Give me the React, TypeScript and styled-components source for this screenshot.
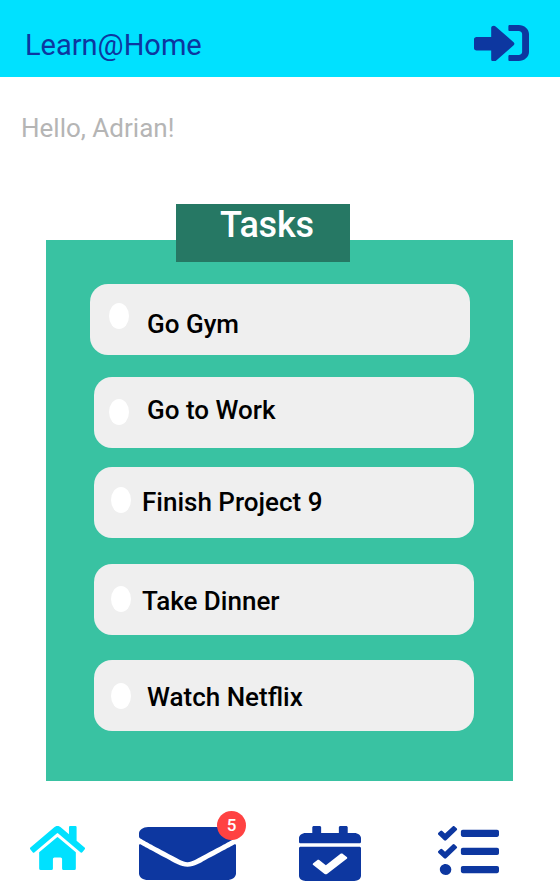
import React from "react";
import styled, { createGlobalStyle } from "styled-components";
import { FaCalendarCheck, FaEnvelope, FaHome, FaSignInAlt, FaTasks } from "react-icons/fa";

const GlobalStyle = createGlobalStyle`
  * { box-sizing: border-box; }
  body { margin: 0; background: #fff; font-family: Roboto, sans-serif; }
`;

const Page = styled.div`
  width: 560px;
  height: 896px;
  display: flex;
  flex-direction: column;
  overflow: hidden;
`;

const Header = styled.header`
  height: 77px;
  background: #00e1ff;
  color: #0d37a0;
  display: flex;
  justify-content: space-between;
  padding: 25px 31px 0 25px;
`;

const Brand = styled.div`
  font-size: 29px;
  line-height: 40px;
`;

const SignInIcon = styled(FaSignInAlt)`
  width: 55px;
  height: 36px;
`;

const Greeting = styled.p`
  margin: 33px 0 0 21px;
  height: 94px;
  font-size: 26px;
  line-height: 36px;
  color: #b5b5b5;
`;

const Board = styled.section`
  width: 467px;
  height: 577px;
  margin-left: 46px;
  display: flex;
  flex-direction: column;
  background: linear-gradient(#fff 36px, #39c2a2 36px);
`;

const BoardTitle = styled.h1`
  margin: 0 0 22px 130px;
  width: 174px;
  height: 58px;
  padding-left: 44px;
  background: #267864;
  color: #fff;
  font-size: 36px;
  font-weight: 500;
  line-height: 42px;
  letter-spacing: -0.2px;
`;

const Task = styled.label<{ $gap: number; $left: number }>`
  display: flex;
  flex: none;
  width: 380px;
  height: 71px;
  margin: ${(p) => p.$gap}px 0 0 ${(p) => p.$left}px;
  border-radius: 18px;
  background: #efefef;
  color: #000;
`;

const Dot = styled.span<{ $left: number; $top: number }>`
  flex: none;
  width: 20px;
  height: 26px;
  border-radius: 50%;
  background: #fff;
  margin: ${(p) => p.$top}px 0 0 ${(p) => p.$left}px;
`;

const TaskName = styled.span<{ $left: number; $top: number }>`
  font-size: 26px;
  font-weight: 500;
  line-height: 30px;
  white-space: nowrap;
  margin: ${(p) => p.$top}px 0 0 ${(p) => p.$left}px;
`;

const Nav = styled.nav`
  display: flex;
  height: 115px;
`;

const Tab = styled.a<{ $left: number; $top: number; $width: number; $height: number; $active?: boolean }>`
  position: relative;
  flex: none;
  margin: ${(p) => p.$top}px 0 0 ${(p) => p.$left}px;
  color: ${(p) => (p.$active ? "#00e1ff" : "#0d37a0")};
  svg {
    display: block;
    width: ${(p) => p.$width}px;
    height: ${(p) => p.$height}px;
  }
`;

const Badge = styled.span`
  position: absolute;
  left: 78px;
  top: -16px;
  width: 29px;
  height: 29px;
  border-radius: 50%;
  background: #ff4242;
  color: #fff;
  font-size: 17px;
  font-weight: 500;
  line-height: 29px;
  text-align: center;
`;

const tasks = [
  { name: "Go Gym", gap: 0, left: 44, dot: 19, dotTop: 19, text: 18, textTop: 25 },
  { name: "Go to Work", gap: 22, left: 48, dot: 15, dotTop: 22, text: 18, textTop: 18 },
  { name: "Finish Project 9", gap: 19, left: 48, dot: 17, dotTop: 20, text: 11, textTop: 20 },
  { name: "Take Dinner", gap: 26, left: 48, dot: 17, dotTop: 22, text: 11, textTop: 22 },
  { name: "Watch Netflix", gap: 25, left: 48, dot: 17, dotTop: 23, text: 16, textTop: 22 },
];

export default function App() {
  return (
    <Page>
      <GlobalStyle />
      <Header>
        <Brand>Learn@Home</Brand>
        <SignInIcon viewBox="0 64 512 384" preserveAspectRatio="none" />
      </Header>
      <Greeting>Hello, Adrian!</Greeting>
      <Board>
        <BoardTitle>Tasks</BoardTitle>
        {tasks.map((t) => (
          <Task key={t.name} $gap={t.gap} $left={t.left}>
            <Dot $left={t.dot} $top={t.dotTop} />
            <TaskName $left={t.text} $top={t.textTop}>{t.name}</TaskName>
          </Task>
        ))}
      </Board>
      <Nav>
        <Tab $left={30} $top={45} $width={55} $height={44} $active>
          <FaHome viewBox="0 32 576 448" preserveAspectRatio="none" />
        </Tab>
        <Tab $left={54} $top={46} $width={97} $height={53}>
          <FaEnvelope viewBox="0 64 512 384" preserveAspectRatio="none" />
          <Badge>5</Badge>
        </Tab>
        <Tab $left={63} $top={45} $width={62} $height={55}>
          <FaCalendarCheck viewBox="0 0 448 512" preserveAspectRatio="none" />
        </Tab>
        <Tab $left={77} $top={45} $width={61} $height={49}>
          <FaTasks viewBox="0 32 512 432" preserveAspectRatio="none" />
        </Tab>
      </Nav>
    </Page>
  );
}
